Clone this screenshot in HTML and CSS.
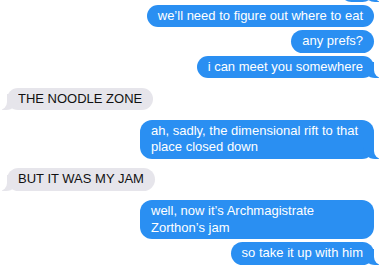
FILE: index.html
```html
<!DOCTYPE html>
<html lang="en">
<head>
    <meta charset="UTF-8">
    <meta name="viewport" content="width=device-width, initial-scale=1.0">
    <title>Messages</title>
    <link rel="stylesheet" href="styles.css">
</head>
<body>
    <div class="thread">
        <div class="msg me tail stub prev"></div>

        <div class="msg me">we’ll need to figure out where to eat</div>
        <div class="msg me">any prefs?</div>
        <div class="msg me tail">i can meet you somewhere</div>

        <div class="msg them tail new-group">THE NOODLE ZONE</div>

        <div class="msg me tail new-group">ah, sadly, the dimensional rift to that place closed down</div>

        <div class="msg them tail new-group">BUT IT WAS MY JAM</div>

        <div class="msg me new-group">well, now it’s Archmagistrate Zorthon’s jam</div>
        <div class="msg me tail">so take it up with him</div>

        <div class="msg them tail stub new-group"></div>
    </div>
</body>
</html>
```

FILE: styles.css
```css
body {
    margin: 0;
    background: #fff;
    font-family: "Liberation Sans", Arial, sans-serif;
    font-size: 13px;
    overflow: hidden;
}

.thread {
    display: flex;
    flex-direction: column;
    padding: 0 11px 0 7px;
}

.msg {
    position: relative;
    max-width: 212px;
    padding: 3px 11px;
    line-height: 16.5px;
    border-radius: 12px;
    margin-top: 3px;
}

.msg.new-group {
    margin-top: 9.5px;
}

.msg.stub {
    width: 110px;
    height: 16.5px;
}

.msg.prev {
    width: 12px;
    margin-top: -21px;
}

.msg.me {
    align-self: flex-end;
    background: #2a8ff2;
    color: #fff;
}

.msg.them {
    align-self: flex-start;
    background: #e6e5eb;
    color: #111;
}

/* little tails on the last bubble of a group */
.msg.tail::before,
.msg.tail::after {
    content: "";
    position: absolute;
    bottom: 0;
    height: 16px;
}

.msg.me.tail::before {
    right: -5px;
    width: 16px;
    background: #2a8ff2;
    border-bottom-left-radius: 12px;
}

.msg.me.tail::after {
    right: -10px;
    width: 10px;
    background: #fff;
    border-bottom-left-radius: 8px;
}

.msg.them.tail::before {
    left: -5px;
    width: 16px;
    background: #e6e5eb;
    border-bottom-right-radius: 12px;
}

.msg.them.tail::after {
    left: -10px;
    width: 10px;
    background: #fff;
    border-bottom-right-radius: 8px;
}
```
